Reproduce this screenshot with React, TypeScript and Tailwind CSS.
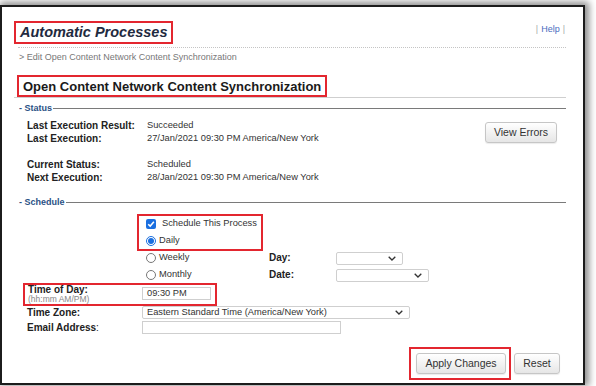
import React from 'react';

const Chevron = () => (
  <svg width="8" height="5" viewBox="0 0 8 5" className="shrink-0">
    <path d="M0.7 0.7 L4 4 L7.3 0.7" fill="none" stroke="#333" strokeWidth="1.3" />
  </svg>
);

function Select({ width, value }: { width: string; value?: string }) {
  return (
    <div
      className={`${width} h-[13px] flex items-center justify-between pl-[4px] pr-[6px] bg-white border border-[#cfcfcf] rounded-[2px] text-[9.3px] leading-none text-[#333]`}
    >
      <span>{value}</span>
      <Chevron />
    </div>
  );
}

function Radio({ checked }: { checked?: boolean }) {
  return checked ? (
    <span className="w-[10px] h-[10px] rounded-full border border-[#1a6fe0] flex items-center justify-center bg-white shrink-0">
      <span className="w-[6px] h-[6px] rounded-full bg-[#1a6fe0]" />
    </span>
  ) : (
    <span className="w-[10px] h-[10px] rounded-full border border-[#777] bg-white shrink-0" />
  );
}

function Legend({ label }: { label: string }) {
  return (
    <div className="flex items-center h-[10px] pl-[5px]">
      <span className="text-[9px] font-bold text-[#2b5185] leading-none pr-[1px]">- {label}</span>
      <div className="flex-1 h-px bg-[#7a7a7a]" />
    </div>
  );
}

function InfoRow({ label, value }: { label: string; value: string }) {
  return (
    <div className="flex items-center h-[13px]">
      <span className="w-[120px] text-[10px] font-bold text-[#222] leading-none">{label}</span>
      <span className="text-[9.3px] text-[#333] leading-none">{value}</span>
    </div>
  );
}

const btn =
  'h-[21px] px-[6px] whitespace-nowrap rounded-[3px] border border-[#c6c6c6] bg-gradient-to-b from-white to-[#e6e6e6] shadow-[0_1px_1px_rgba(0,0,0,0.08)] text-[10.5px] text-[#333] leading-none flex items-center justify-center';

export default function App() {
  return (
    <div
      className="w-[596px] h-[386px] bg-white overflow-hidden pt-[5px]"
      style={{ fontFamily: '"Liberation Sans", Arial, sans-serif' }}
    >
      <div className="w-[585px] h-[380px] border-2 border-[#1c1c1c] bg-white pl-[12px] pr-[17px] pt-[14px] shadow-[2px_-1px_7px_2px_rgba(0,0,0,0.45)]">
        {/* Header */}
        <div className="flex justify-between items-start">
          <div className="h-[23px] border-2 border-[#e3262f] px-[4px] flex items-center">
            <span className="text-[14.5px] font-bold italic text-[#1f2a40] leading-none">
              Automatic Processes
            </span>
          </div>
          <div className="mt-[3px] h-[10px] flex items-center text-[9px] leading-none text-[#aaa] pr-[1px]">
            <span>|</span>
            <span className="text-[#4a6cc0] px-[3px]">Help</span>
            <span>|</span>
          </div>
        </div>
        <div className="mt-[3px] ml-[4px] border-t border-dotted border-[#c4c4c4]" />
        <div className="mt-[4px] pl-[5px] h-[10px] text-[9px] leading-[10px] text-[#777]">
          &gt; Edit Open Content Network Content Synchronization
        </div>

        {/* Title */}
        <div className="mt-[13px] border-b border-[#cfcfcf]">
          <div className="ml-[3px] w-fit h-[22px] border-2 border-[#e3262f] px-[4px] flex items-center">
            <span className="text-[13px] font-bold text-[#1a1a1a] leading-none">
              Open Content Network Content Synchronization
            </span>
          </div>
        </div>

        {/* Status */}
        <div className="mt-[5px]">
          <Legend label="Status" />
        </div>
        <div className="mt-[6px] pl-[13px] flex justify-between">
          <div>
            <InfoRow label="Last Execution Result:" value="Succeeded" />
            <InfoRow label="Last Execution:" value="27/Jan/2021 09:30 PM America/New York" />
            <div className="mt-[13px]">
              <InfoRow label="Current Status:" value="Scheduled" />
              <InfoRow label="Next Execution:" value="28/Jan/2021 09:30 PM America/New York" />
            </div>
          </div>
          <div className="mt-[3px] mr-[9px]">
            <button className={`${btn} w-[72px] h-[20px]`}>View Errors</button>
          </div>
        </div>

        {/* Schedule */}
        <div className="mt-[13px]">
          <Legend label="Schedule" />
        </div>
        <div className="pl-[13px]">
          <div className="mt-[7px] ml-[110px] w-[126px] h-[37px] border-2 border-[#e3262f] pl-[7px]">
            <div className="mt-[1px] h-[14px] flex items-center">
              <span className="w-[10px] h-[10px] rounded-[2px] bg-[#1a6fe0] flex items-center justify-center shrink-0">
                <svg width="8" height="8" viewBox="0 0 8 8">
                  <path d="M1.2 4.2 L3.2 6.1 L6.9 1.8" fill="none" stroke="#fff" strokeWidth="1.5" />
                </svg>
              </span>
              <span className="ml-[6px] text-[9.3px] text-[#333] leading-none">Schedule This Process</span>
            </div>
            <div className="mt-[3px] h-[14px] flex items-center">
              <Radio checked />
              <span className="ml-[3px] text-[9.3px] text-[#333] leading-none">Daily</span>
            </div>
          </div>

          <div className="h-[14px] flex items-center">
            <div className="ml-[119px] w-[123px] flex items-center">
              <Radio />
              <span className="ml-[3px] text-[9.3px] text-[#333] leading-none">Weekly</span>
            </div>
            <span className="w-[67px] text-[10px] font-bold text-[#222] leading-none">Day:</span>
            <Select width="w-[67px]" />
          </div>
          <div className="mt-[3px] h-[14px] flex items-center">
            <div className="ml-[119px] w-[123px] flex items-center">
              <Radio />
              <span className="ml-[3px] text-[9.3px] text-[#333] leading-none">Monthly</span>
            </div>
            <span className="w-[67px] text-[10px] font-bold text-[#222] leading-none">Date:</span>
            <Select width="w-[93px]" />
          </div>

          <div className="mt-[1px] -ml-[4px] w-[194px] h-[23px] border-2 border-[#e3262f] pl-[3px] flex items-start">
            <div className="w-[114px]">
              <div className="text-[10px] font-bold text-[#222] leading-[10px]">Time of Day:</div>
              <div className="text-[8.5px] text-[#888] leading-[9px]">(hh:mm AM/PM)</div>
            </div>
            <div className="mt-[2px] w-[69px] h-[13px] border border-[#cfcfcf] bg-white pl-[4px] flex items-center text-[9.3px] text-[#333] leading-none">
              09:30 PM
            </div>
          </div>

          <div className="h-[13px] flex items-center">
            <span className="w-[115px] text-[10px] font-bold text-[#222] leading-none">Time Zone:</span>
            <Select width="w-[268px]" value="Eastern Standard Time (America/New York)" />
          </div>
          <div className="mt-[2px] h-[13px] flex items-center">
            <span className="w-[115px] text-[10px] text-[#222] leading-none">
              <span className="font-bold">Email Address</span>:
            </span>
            <div className="w-[199px] h-[13px] border border-[#cfcfcf] bg-white" />
          </div>
        </div>

        {/* Actions */}
        <div className="mt-[13px] flex justify-end items-center pr-[6px]">
          <div className="h-[33px] border-2 border-[#e3262f] pl-[5px] pr-[3px] pt-[4px]">
            <button className={`${btn} w-[90px]`}>Apply Changes</button>
          </div>
          <button className={`${btn} ml-[3px] w-[46px]`}>Reset</button>
        </div>
      </div>
    </div>
  );
}
